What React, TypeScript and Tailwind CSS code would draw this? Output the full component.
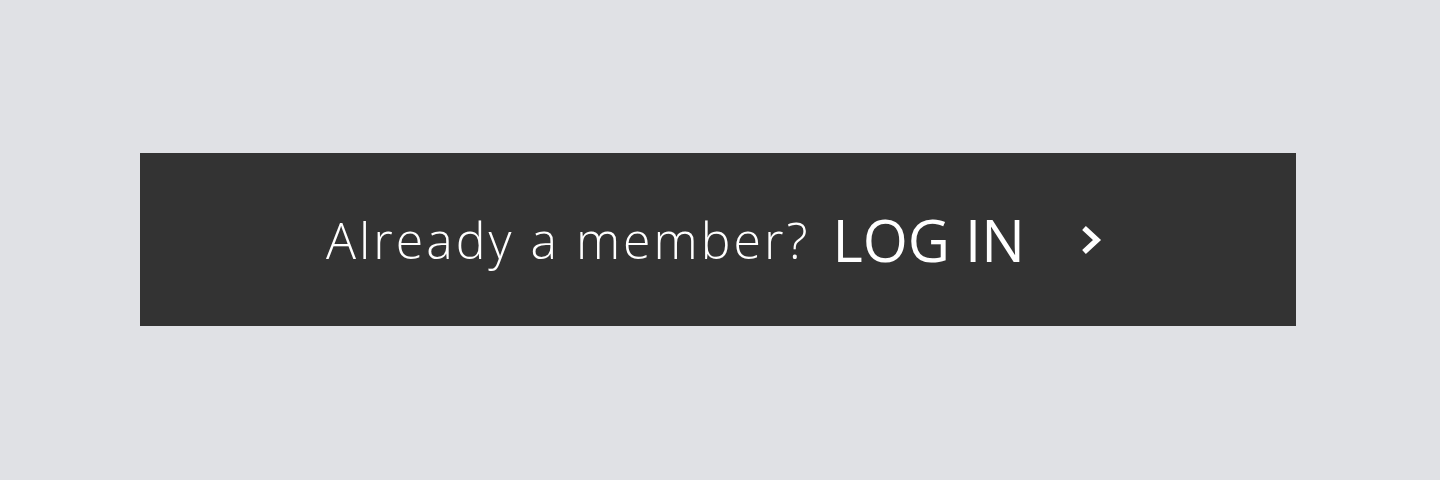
export default function App() {
  return (
    <div className="min-h-[480px] w-full bg-[#e0e1e5] pt-[153px] pl-[140px] font-['Open_Sans',sans-serif]">
      <a
        href="#"
        className="w-[1156px] h-[173px] bg-[#333333] flex items-center justify-center text-white pr-[6px]"
      >
        <span className="text-[50px] font-light leading-none tracking-[3px]">Already a member?</span>
        <span className="ml-[22px] text-[58px] font-normal leading-none">LOG IN</span>
        <svg
          className="ml-[55px] w-[24px] h-[30px]"
          viewBox="0 0 24 30"
          fill="none"
          stroke="currentColor"
          strokeWidth="5.5"
          strokeLinecap="butt"
          strokeLinejoin="miter"
        >
          <path d="M4 3 L17 15 L4 27" />
        </svg>
      </a>
    </div>
  );
}
